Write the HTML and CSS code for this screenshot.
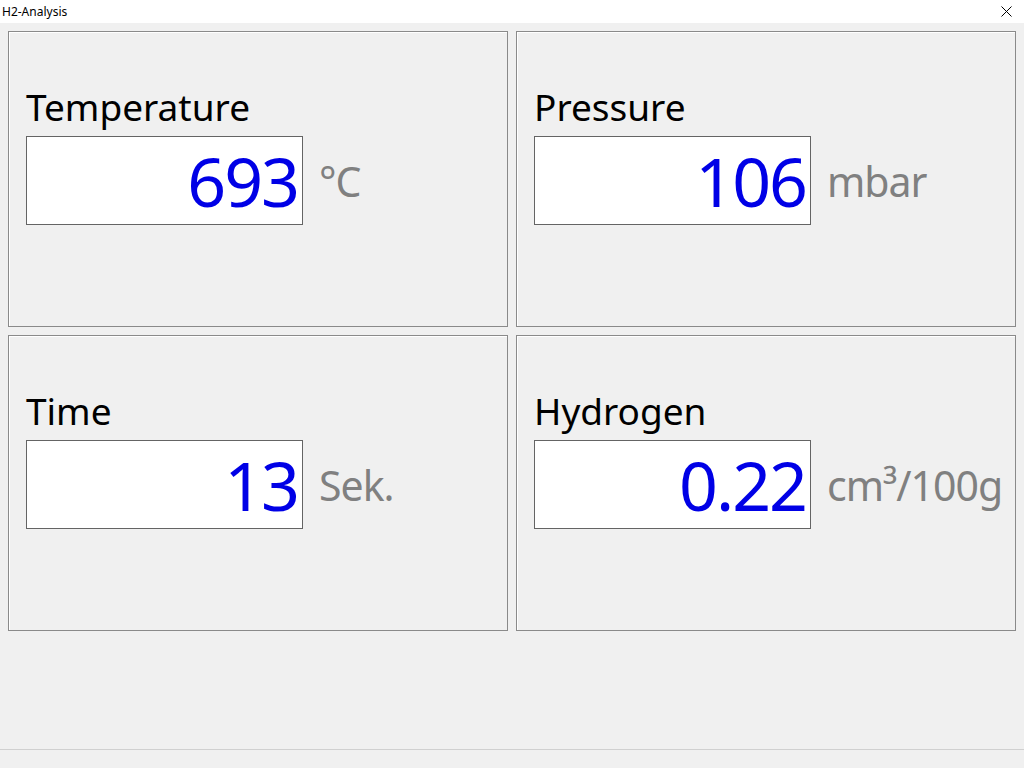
FILE: index.html
```html
<!DOCTYPE html>
<html lang="de">
<head>
<meta charset="utf-8">
<title>H2-Analysis</title>
<link rel="stylesheet" href="styles.css">
</head>
<body>
<div class="window">
  <header class="titlebar">
    <span class="title">H2-Analysis</span>
    <span class="close">
      <svg width="11" height="11" viewBox="0 0 11 11"><path d="M0.5 0.5 L10.5 10.5 M10.5 0.5 L0.5 10.5" stroke="#000" stroke-width="1" fill="none"/></svg>
    </span>
  </header>
  <main class="content">
    <section class="panel">
      <div class="label">Temperature</div>
      <div class="row">
        <div class="valuebox">693</div>
        <div class="unit">°C</div>
      </div>
    </section>
    <section class="panel">
      <div class="label">Pressure</div>
      <div class="row">
        <div class="valuebox">106</div>
        <div class="unit">mbar</div>
      </div>
    </section>
    <section class="panel">
      <div class="label">Time</div>
      <div class="row">
        <div class="valuebox">13</div>
        <div class="unit">Sek.</div>
      </div>
    </section>
    <section class="panel">
      <div class="label">Hydrogen</div>
      <div class="row">
        <div class="valuebox">0.22</div>
        <div class="unit">cm³/100g</div>
      </div>
    </section>
  </main>
  <footer class="statusbar"></footer>
</div>
</body>
</html>
```
FILE: styles.css
```css
html, body {
  margin: 0;
  padding: 0;
}
body {
  width: 1024px;
  height: 768px;
  overflow: hidden;
  background: #f0f0f0;
  font-family: "Noto Sans", "Open Sans", sans-serif;
}
.window {
  display: flex;
  flex-direction: column;
  height: 768px;
}
.titlebar {
  height: 23px;
  background: #ffffff;
  display: flex;
  align-items: center;
  justify-content: space-between;
  padding: 0 12px 0 2px;
  box-sizing: border-box;
}
.title {
  font-size: 12px;
  color: #000;
  line-height: 23px;
}
.close {
  display: flex;
  align-items: center;
  height: 23px;
}
.content {
  display: grid;
  grid-template-columns: 500px 500px;
  grid-template-rows: 296px 296px;
  gap: 8px;
  padding: 8px;
  flex: 1;
  align-content: start;
}
.panel {
  border: 1px solid #8a8a8a;
  box-shadow: inset 1px 1px 0 #ffffff;
  box-sizing: border-box;
  padding: 51px 0 0 17px;
}
.label {
  font-size: 37px;
  line-height: 48px;
  color: #000;
  height: 53px;
  letter-spacing: 0;
}
.row {
  display: flex;
  align-items: center;
  gap: 16px;
}
.valuebox {
  width: 277px;
  height: 89px;
  box-sizing: border-box;
  background: #ffffff;
  border: 1px solid #646464;
  color: #0000e6;
  font-size: 68px;
  line-height: 87px;
  text-align: right;
  padding-right: 4px;
  letter-spacing: -2px;
}
.unit {
  font-size: 41px;
  color: #808080;
  letter-spacing: -1px;
}
.statusbar {
  height: 18px;
  border-top: 1px solid #d0d0d0;
  background: #f0f0f0;
}
```
